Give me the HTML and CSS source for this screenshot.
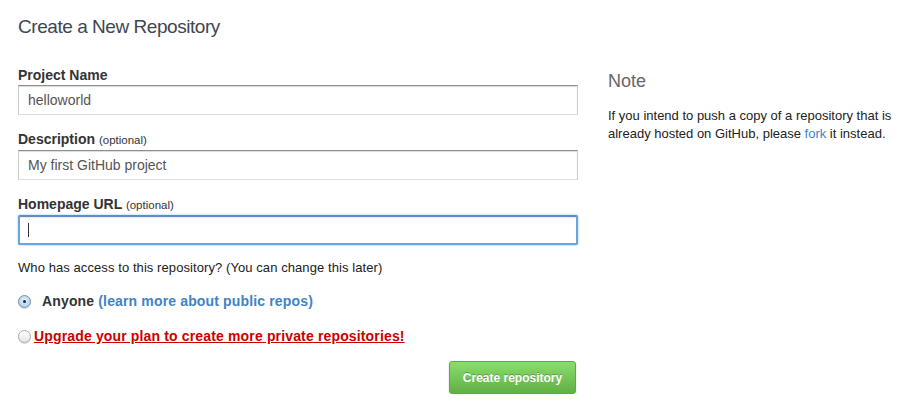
FILE: index.html
```html
<!DOCTYPE html>
<html>
<head>
<meta charset="utf-8">
<link rel="stylesheet" href="styles.css">
</head>
<body>
<div class="page">
  <h1 class="title">Create a New Repository</h1>
  <div class="layout">
    <form class="form">
      <div class="field">
        <label class="label">Project Name</label>
        <div class="input">helloworld</div>
      </div>
      <div class="field">
        <label class="label">Description <span class="opt">(optional)</span></label>
        <div class="input">My first GitHub project</div>
      </div>
      <div class="field">
        <label class="label">Homepage URL <span class="opt">(optional)</span></label>
        <div class="input focus"><span class="caret"></span></div>
      </div>
      <p class="access">Who has access to this repository? (You can change this later)</p>
      <div class="radio-row">
        <span class="radio checked"></span>
        <span class="anyone">Anyone <a class="link" href="#">(learn more about public repos)</a></span>
      </div>
      <div class="radio-row upgrade-row">
        <span class="radio"></span>
        <a class="upgrade" href="#">Upgrade your plan to create more private repositories!</a>
      </div>
      <div class="actions">
        <button type="button" class="btn">Create repository</button>
      </div>
    </form>
    <aside class="note">
      <h2 class="note-title">Note</h2>
      <p class="note-text">If you intend to push a copy of a repository that is already hosted on GitHub, please <a class="link-plain" href="#">fork</a> it instead.</p>
    </aside>
  </div>
</div>
</body>
</html>
```
FILE: styles.css
```css
html, body {
  margin: 0;
  padding: 0;
  background: #fff;
}
body {
  font-family: "Liberation Sans", Arial, Helvetica, sans-serif;
  color: #333;
  font-size: 13px;
}
.page {
  padding: 14px 0 0 18px;
}
.title {
  margin: 0;
  font-size: 19px;
  font-weight: normal;
  color: #3d4751;
  letter-spacing: -0.45px;
  line-height: 26px;
}
.layout {
  display: flex;
  gap: 30px;
  margin-top: 27px;
}
.form {
  width: 560px;
  margin: 0;
}
.field {
  display: flex;
  flex-direction: column;
  margin-bottom: 16px;
}
.label {
  font-size: 14px;
  font-weight: bold;
  color: #333;
  line-height: 17px;
  margin-bottom: 1px;
}
.opt {
  font-size: 11.5px;
  font-weight: normal;
}
.input {
  box-sizing: border-box;
  height: 30px;
  border: 1px solid #ccc;
  border-top-color: #8f8f8f;
  border-bottom-color: #ddd;
  box-shadow: inset 0 1px 1px rgba(0,0,0,0.15);
  padding: 0 9px;
  display: flex;
  align-items: center;
  font-size: 14px;
  color: #555;
}
.input.focus {
  border: 2px solid #6aa5dd;
  border-top-color: #5c8fc0;
  border-radius: 2px;
  box-shadow: 0 0 2px #7fb6ea, inset 0 1px 1px rgba(0,0,0,0.1);
  padding: 0 8px;
}
.caret {
  display: block;
  width: 1px;
  height: 14px;
  background: #333;
}
.access {
  margin: -2px 0 0 0;
  font-size: 13px;
  line-height: 18px;
  color: #222;
  letter-spacing: 0.08px;
}
.radio-row {
  display: flex;
  align-items: center;
  margin-top: 15px;
  height: 18px;
}
.upgrade-row {
  margin-top: 17px;
}
.radio {
  box-sizing: border-box;
  width: 13px;
  height: 13px;
  border-radius: 50%;
  border: 1px solid #a9a9a9;
  background: linear-gradient(#fff, #e6e6e6);
  box-shadow: 0 1px 1px rgba(0,0,0,0.15);
  display: flex;
  align-items: center;
  justify-content: center;
  margin-right: 3px;
}
.radio.checked {
  border-color: #6b8fb8;
  background: radial-gradient(circle at 50% 40%, #e2eefa, #a8c8ea);
  margin-right: 11px;
}
.radio.checked::after {
  content: "";
  width: 3px;
  height: 3px;
  border-radius: 50%;
  background: #1b2a3a;
}
.anyone {
  font-size: 14px;
  font-weight: bold;
  color: #333;
  letter-spacing: 0.15px;
}
.link {
  color: #4183c4;
  text-decoration: none;
}
.upgrade {
  font-size: 14px;
  font-weight: bold;
  color: #cc0000;
  text-decoration: underline;
  letter-spacing: 0.15px;
}
.actions {
  display: flex;
  justify-content: flex-end;
  margin-top: 16px;
  padding-right: 2px;
}
.btn {
  font-family: "Liberation Sans", Arial, Helvetica, sans-serif;
  font-size: 12px;
  font-weight: bold;
  color: #fff;
  text-shadow: 0 -1px 0 rgba(0,0,0,0.25);
  width: 127px;
  height: 33px;
  border: 1px solid #5ca941;
  border-radius: 3px;
  background: linear-gradient(#8add6d, #60b044);
  box-shadow: 0 1px 2px rgba(0,0,0,0.2);
  padding: 0;
  cursor: pointer;
}
.note {
  width: 300px;
  padding-top: 3px;
}
.note-title {
  margin: 0;
  font-size: 18px;
  font-weight: normal;
  color: #666;
  line-height: 22px;
}
.note-text {
  margin: 15px 0 0 0;
  font-size: 13px;
  line-height: 18px;
  color: #222;
}
.link-plain {
  color: #4183c4;
  text-decoration: none;
}
```
